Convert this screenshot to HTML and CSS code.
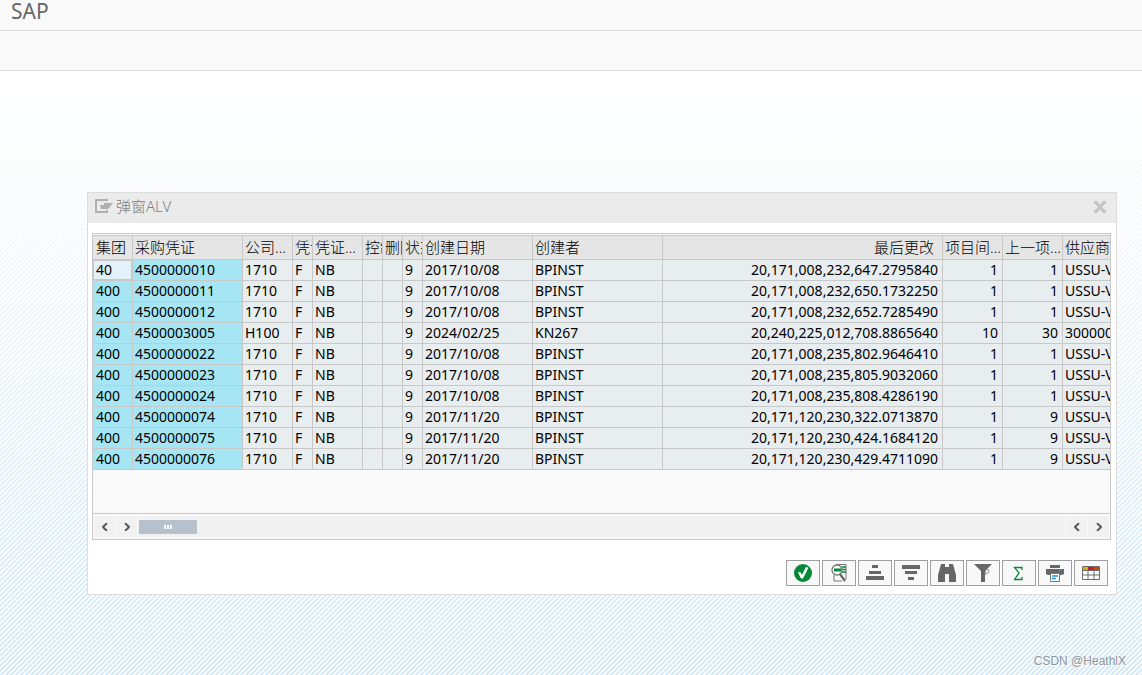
FILE: index.html
```html
<!DOCTYPE html>
<html lang="zh">
<head>
<meta charset="utf-8">
<title>SAP</title>
<link rel="stylesheet" href="styles.css">
</head>
<body>
<header class="titlebar"><h1>SAP</h1></header>
<div class="toolbar"></div>
<main class="workspace">
  <section class="dialog" aria-labelledby="dialog-title">
    <div class="dialog-head">
      <svg class="dialog-icon" width="19" height="14" viewBox="0 0 19 14"><path d="M12 2V1H1v12h11v-2" fill="none" stroke="#b0b0b0" stroke-width="2"/><path d="M5 6h4V4h9l-5 6H6z" fill="#b0b0b0"/></svg>
      <h2 id="dialog-title">弹窗ALV</h2>
      <button class="close" aria-label="关闭"><svg width="14" height="14" viewBox="0 0 14 14"><path d="M1 1h3l3 3.500 3-3.500h3v2L9 7l4 4v2h-3l-3-3.500-3 3.500H1v-2l4-4-4-4z" fill="#c6c6c6"/></svg></button>
    </div>
    <div class="grid-frame">
      <div class="grid-view">
        <table>
          <colgroup><col class="w40"><col class="w110"><col class="w50"><col class="w20"><col class="w50"><col class="w20"><col class="w20"><col class="w20"><col class="w110"><col class="w130"><col class="w280"><col class="w60"><col class="w60"><col></colgroup>
          <thead><tr><th>集团</th><th>采购凭证</th><th>公司...</th><th>凭证</th><th>凭证...</th><th>控制</th><th>删除</th><th>状态</th><th>创建日期</th><th>创建者</th><th class="last-change">最后更改</th><th>项目间...</th><th>上一项...</th><th>供应商</th></tr></thead>
          <tbody>
            <tr><td class="key edit"><input aria-label="集团" value="40"></td><td class="key">4500000010</td><td>1710</td><td>F</td><td>NB</td><td></td><td></td><td>9</td><td>2017/10/08</td><td>BPINST</td><td class="num">20,171,008,232,647.2795840</td><td class="num">1</td><td class="num">1</td><td>USSU-VSF01</td></tr>
            <tr><td class="key">400</td><td class="key">4500000011</td><td>1710</td><td>F</td><td>NB</td><td></td><td></td><td>9</td><td>2017/10/08</td><td>BPINST</td><td class="num">20,171,008,232,650.1732250</td><td class="num">1</td><td class="num">1</td><td>USSU-VSF01</td></tr>
            <tr><td class="key">400</td><td class="key">4500000012</td><td>1710</td><td>F</td><td>NB</td><td></td><td></td><td>9</td><td>2017/10/08</td><td>BPINST</td><td class="num">20,171,008,232,652.7285490</td><td class="num">1</td><td class="num">1</td><td>USSU-VSF01</td></tr>
            <tr><td class="key">400</td><td class="key">4500003005</td><td>H100</td><td>F</td><td>NB</td><td></td><td></td><td>9</td><td>2024/02/25</td><td>KN267</td><td class="num">20,240,225,012,708.8865640</td><td class="num">10</td><td class="num">30</td><td>3000000</td></tr>
            <tr><td class="key">400</td><td class="key">4500000022</td><td>1710</td><td>F</td><td>NB</td><td></td><td></td><td>9</td><td>2017/10/08</td><td>BPINST</td><td class="num">20,171,008,235,802.9646410</td><td class="num">1</td><td class="num">1</td><td>USSU-VSF01</td></tr>
            <tr><td class="key">400</td><td class="key">4500000023</td><td>1710</td><td>F</td><td>NB</td><td></td><td></td><td>9</td><td>2017/10/08</td><td>BPINST</td><td class="num">20,171,008,235,805.9032060</td><td class="num">1</td><td class="num">1</td><td>USSU-VSF01</td></tr>
            <tr><td class="key">400</td><td class="key">4500000024</td><td>1710</td><td>F</td><td>NB</td><td></td><td></td><td>9</td><td>2017/10/08</td><td>BPINST</td><td class="num">20,171,008,235,808.4286190</td><td class="num">1</td><td class="num">1</td><td>USSU-VSF01</td></tr>
            <tr><td class="key">400</td><td class="key">4500000074</td><td>1710</td><td>F</td><td>NB</td><td></td><td></td><td>9</td><td>2017/11/20</td><td>BPINST</td><td class="num">20,171,120,230,322.0713870</td><td class="num">1</td><td class="num">9</td><td>USSU-VSF01</td></tr>
            <tr><td class="key">400</td><td class="key">4500000075</td><td>1710</td><td>F</td><td>NB</td><td></td><td></td><td>9</td><td>2017/11/20</td><td>BPINST</td><td class="num">20,171,120,230,424.1684120</td><td class="num">1</td><td class="num">9</td><td>USSU-VSF01</td></tr>
            <tr><td class="key">400</td><td class="key">4500000076</td><td>1710</td><td>F</td><td>NB</td><td></td><td></td><td>9</td><td>2017/11/20</td><td>BPINST</td><td class="num">20,171,120,230,429.4711090</td><td class="num">1</td><td class="num">9</td><td>USSU-VSF01</td></tr>
          </tbody>
        </table>
      </div>
      <div class="scrollbar">
        <button aria-label="向左"><svg width="6" height="8" viewBox="0 0 6 8"><path d="M5 0L1 4l4 4" /></svg></button>
        <button aria-label="向右"><svg width="6" height="8" viewBox="0 0 6 8"><path d="M1 0l4 4-4 4" /></svg></button>
        <div class="track"><div class="thumb"><i></i><i></i><i></i></div></div>
        <button aria-label="向左"><svg width="6" height="8" viewBox="0 0 6 8"><path d="M5 0L1 4l4 4" /></svg></button>
        <button aria-label="向右"><svg width="6" height="8" viewBox="0 0 6 8"><path d="M1 0l4 4-4 4" /></svg></button>
      </div>
    </div>
    <div class="actions">
      <button aria-label="确认"><svg width="18" height="18" viewBox="0 0 18 18"><circle cx="9" cy="9" r="9" fill="#068839"/><path d="M4 8.500l2-.8 2 3L12 3l2.400.8L9 14.500H7z" fill="#fff"/></svg></button>
      <button aria-label="明细"><svg width="18" height="18" viewBox="0 0 18 18"><path d="M6 .5h10v15M4 11v6h8" fill="none" stroke="#777"/><path d="M12 3h4M12 5.500h4M12 8h4" stroke="#068839" stroke-width="1.500"/><circle cx="7" cy="6" r="5" fill="#fff" stroke="#777" stroke-width="1.300"/><path d="M4 4.500h7v3H4z" fill="#068839"/><path d="M10 10l5 7" stroke="#666" stroke-width="2.200"/></svg></button>
      <button aria-label="升序"><svg width="18" height="18" viewBox="0 0 18 18"><path d="M6 1h6v3H6zM3 7h12v3H3zM0 12h18v4H0z" fill="#666"/></svg></button>
      <button aria-label="降序"><svg width="18" height="18" viewBox="0 0 18 18"><path d="M0 1h18v4H0zM3 7h12v3H3zM6 13h6v3H6z" fill="#666"/></svg></button>
      <button aria-label="查找"><svg width="18" height="18" viewBox="0 0 18 18"><path d="M3 0h4v3h4V0h4l3 11v7h-7v-8H7v8H0v-7z" fill="#666"/></svg></button>
      <button aria-label="过滤"><svg width="18" height="18" viewBox="0 0 18 18"><path d="M0 0h18l-7 7v11H7V7z" fill="#666"/><path d="M11 10c0-3 1-5 3-5 2 2 0 5-3 5" fill="#f7f7f7" stroke="#888"/></svg></button>
      <button aria-label="合计"><svg width="18" height="18" viewBox="0 0 18 18"><path d="M12 6V3.500H4.500L9 9l-4.500 6.500H12V13" fill="none" stroke="#068839" stroke-width="1.300"/></svg></button>
      <button aria-label="打印"><svg width="18" height="18" viewBox="0 0 18 18"><path d="M4 1h10v3H4z" fill="#666"/><path d="M0 5h18v5l-2 1H2L0 10z" fill="#666"/><path d="M13 5h3v1.500h-3z" fill="#2196d4"/><path d="M4.500 9.500h9v8h-9z" fill="#fff" stroke="#777"/><path d="M6 12h6M6 14.500h4" stroke="#2196d4" stroke-width="1.500"/></svg></button>
      <button aria-label="布局"><svg width="18" height="18" viewBox="0 0 18 18"><path d="M.5 2.500h17v13H.5z" fill="#fff"/><path d="M.5 2.500h17v13H.5zM0 6.500h18M0 11h18M6 2v14M12 2v14" fill="none" stroke="#6c6c74"/><path d="M1 3h5v3H1z" fill="#e8a900"/><path d="M6 3h6v3H6z" fill="#cf142b"/><path d="M12 3h5v3h-5z" fill="#cc4a00"/></svg></button>
    </div>
  </section>
</main>
<p class="watermark">CSDN @HeathlX</p>
</body>
</html>
```
FILE: styles.css
```css
* { box-sizing: border-box; }
body {
  margin: 0;
  min-height: 100vh;
  display: flex;
  flex-direction: column;
  font: 14px/20px "Noto Sans", "Noto Sans CJK SC", sans-serif;
  color: #000;
  background:
    linear-gradient(to bottom, #fff 80px, rgba(255, 255, 255, 0) 100%),
    linear-gradient(135deg, #d6ebf7 0 30%, #fff 30% 50%, #d6ebf7 50% 80%, #fff 80%) 0 0 / 5px 5px;
}
button { margin: 0; padding: 0; border: 0; background: none; display: flex; align-items: center; justify-content: center; }
svg { display: block; }
.titlebar { height: 31px; padding: 0 11px; background: #f9f9f9; border-bottom: 1px solid #dcdcdc; }
h1 { margin: 0; font: 21px/22px "Noto Sans", sans-serif; color: #666; }
.toolbar { height: 40px; background: #f9f9f9; border-bottom: 1px solid #dcdcdc; }
.workspace { padding: 121px 25px 0 87px; flex: 1; }
.dialog { background: #fff; border: 1px solid #dcdcdc; padding-bottom: 8px; }
.dialog-head { display: flex; align-items: flex-start; height: 30px; padding: 3px 9px 0 7px; background: #ebebeb; }
.dialog-icon { margin-top: 3px; }
.close { margin-top: 4px; }
h2 { margin: 0 0 0 2px; flex: 1; font: 300 15px/20px "Noto Sans", "Noto Sans CJK SC", sans-serif; color: #808080; }
.grid-frame { margin: 10px 5px 0 4px; border: 1px solid #c8c8c8; background: #f9f9f9; }
.grid-view { min-height: 280px; padding-top: 1px; overflow: hidden; border-bottom: 1px solid #c8c8c8; }
table { width: 100%; table-layout: fixed; border-collapse: separate; border-spacing: 0; border-top: 1px solid #c8c8c8; }
th, td { padding: 0 4px 0 2px; height: 21px; line-height: 20px; overflow: hidden; white-space: nowrap; text-align: left; font-weight: 400; border-right: 1px solid #c8c8c8; border-bottom: 1px solid #c8c8c8; background: #e8edf0; }
th { height: 24px; padding: 0 0 0 2px; line-height: 23px; font-size: 15px; font-weight: 300; background: #e5e5e5; }
th:last-child, td:last-child { border-right: 0; padding-right: 0; }
th:first-child, td:first-child { padding-left: 3px; }
.last-change { text-align: right; padding-right: 8px; }
.num { text-align: right; }
.key { background: #a5e5f4; }
td.edit:first-child { padding: 0; }
.edit input { display: block; width: 100%; height: 20px; padding: 0 2px; border: 1px solid #c8c8c8; background: #e3f1fb; font: inherit; color: inherit; outline: 0; }
.w20 { width: 20px; }
.w40 { width: 40px; }
.w50 { width: 50px; }
.w60 { width: 60px; }
.w110 { width: 110px; }
.w130 { width: 130px; }
.w280 { width: 280px; }
.scrollbar { display: flex; gap: 1px; height: 25px; padding: 2px 1px; }
.scrollbar button { width: 21px; background: #f1f1f1; }
.scrollbar path { fill: none; stroke: #5a5a64; stroke-width: 2; }
.track { flex: 1; display: flex; align-items: center; padding-left: 1px; background: #f1f1f1; }
.thumb { display: flex; justify-content: center; align-items: center; gap: 1px; width: 58px; height: 14px; background: #b7c1cb; }
.thumb i { width: 2px; height: 4px; background: #fff; }
.actions { display: flex; justify-content: flex-end; gap: 2px; margin: 20px 8px 0; }
.actions button { width: 34px; height: 26px; border: 1px solid #a0a0a0; background: #f8f8f8; }
.watermark { margin: 0; padding: 0 16px 4px; text-align: right; font: 12px/20px "Liberation Sans", sans-serif; color: #909599; text-shadow: 1px 1px 0 #fff; }
```
